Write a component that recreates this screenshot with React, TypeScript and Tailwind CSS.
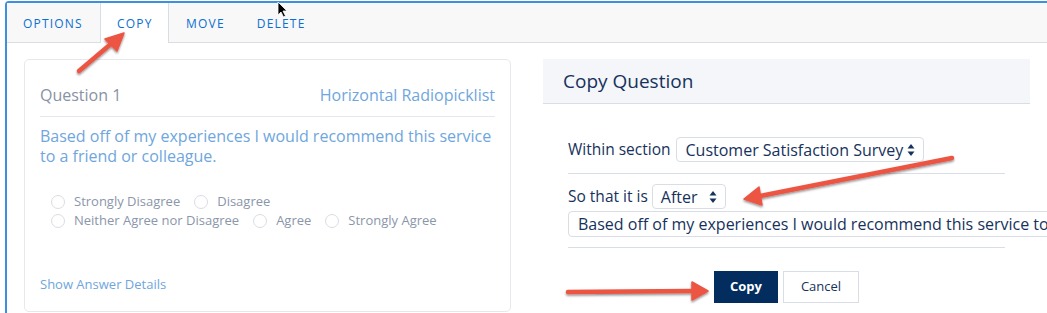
import React from "react";

const font = { fontFamily: '"Open Sans", "Lato", sans-serif' };

function Radio({ label }: { label: string }) {
  return (
    <span className="flex items-center gap-[9px] mr-[14px]">
      <span className="inline-block w-[14px] h-[14px] rounded-full border border-[#d8dde6] bg-white" />
      <span>{label}</span>
    </span>
  );
}

function UpDown() {
  return (
    <svg width="8" height="14" viewBox="0 0 8 14" className="ml-[4px]">
      <path d="M4 1 L7.5 5.5 L0.5 5.5 Z" fill="#16325c" />
      <path d="M4 13 L7.5 8.5 L0.5 8.5 Z" fill="#16325c" />
    </svg>
  );
}

export default function App() {
  return (
    <div
      className="relative w-[1047px] h-[313px] overflow-hidden bg-white"
      style={font}
    >
      <div className="ml-[5px] mt-[1px] h-[330px] border-l-2 border-t-2 border-[#3d8fdf] rounded-tl-[4px]">
        {/* tab bar */}
        <div className="flex h-[40px] bg-[#f8f8f8] border-b border-[#d8dde6] text-[12px] tracking-[0.1em] text-[#0b6fd1]">
          <div className="flex items-center pt-[2px] px-[16px] w-[93px]">OPTIONS</div>
          <div className="flex items-center pt-[2px] px-[16px] w-[69px] bg-white border-l border-r border-[#d8dde6] h-[40px] -mb-px">
            COPY
          </div>
          <div className="flex items-center pt-[2px] pl-[17px] pr-[15px]">MOVE</div>
          <div className="flex items-center pt-[2px] px-[17px]">DELETE</div>
        </div>

        {/* content */}
        <div className="flex gap-[32px] pl-[17px] pt-[16px]">
          {/* left card */}
          <div className="w-[487px] h-[253px] shrink-0 border border-[#e6e8ec] rounded-[5px] px-[15px] pt-[23px]">
            <div className="flex justify-between items-center pb-[9px] border-b border-[#e3e7ee]">
              <span className="text-[16px] text-[#8792a5]">Question 1</span>
              <span className="text-[16px] text-[#6fa6dd]">Horizontal Radiopicklist</span>
            </div>
            <div className="mt-[9px] text-[16px] leading-[20px] text-[#6fa6dd]">
              Based off of my experiences I would recommend this service
              <br />
              to a friend or colleague.
            </div>
            <div className="mt-[26px] pl-[11px] text-[13px] leading-[19px] text-[#8a96aa]">
              <div className="flex">
                <Radio label="Strongly Disagree" />
                <Radio label="Disagree" />
              </div>
              <div className="flex">
                <Radio label="Neither Agree nor Disagree" />
                <Radio label="Agree" />
                <Radio label="Strongly Agree" />
              </div>
            </div>
            <div className="mt-[45px] text-[13px] text-[#6fa6dd]">Show Answer Details</div>
          </div>

          {/* right panel */}
          <div className="w-[487px] shrink-0 text-[#16325c]">
            <div className="h-[45px] bg-[#f4f6f9] border-b border-[#d8dde6] flex items-center px-[20px] text-[19px]">
              Copy Question
            </div>
            <div className="px-[25px]">
              <div className="mt-[33px] flex items-center text-[15.5px] pb-[11px] border-b border-[#d8dde6]">
                <span className="mr-[6px]">Within section</span>
                <span className="flex items-center h-[25px] px-[8px] border border-[#d8dde6] rounded-[4px] text-[16px]">
                  Customer Satisfaction Survey
                  <UpDown />
                </span>
              </div>
              <div className="mt-[10px] flex items-center text-[15.5px]">
                <span className="mr-[4px]">So that it is</span>
                <span className="flex items-center justify-between w-[74px] h-[25px] px-[8px] border border-[#d8dde6] rounded-[4px] text-[16px]">
                  After
                  <UpDown />
                </span>
              </div>
              <div className="mt-[2px] w-[520px] h-[26px] flex items-center px-[9px] border border-[#d8dde6] rounded-[4px] text-[16px] whitespace-nowrap overflow-hidden">
                Based off of my experiences I would recommend this service to
              </div>
              <div className="mt-[10px] border-b border-[#d8dde6]" />
              <div className="mt-[23px] flex justify-center gap-[5px] text-[13px]">
                <button className="h-[32px] w-[64px] bg-[#032d5f] text-white font-bold">Copy</button>
                <button className="h-[32px] w-[76px] bg-white border border-[#d8dde6] text-[#16325c]">
                  Cancel
                </button>
              </div>
            </div>
          </div>
        </div>
      </div>

      {/* annotation arrows and cursor */}
      <svg
        className="absolute left-0 top-0 pointer-events-none"
        width="1047"
        height="313"
        viewBox="0 0 1047 313"
      >
        <defs>
          <filter id="sh" x="-20%" y="-20%" width="140%" height="140%">
            <feDropShadow dx="0" dy="1.5" stdDeviation="1.2" floodColor="#000" floodOpacity="0.45" />
          </filter>
        </defs>
        <g filter="url(#sh)" fill="#ec5443" stroke="#ec5443" strokeLinecap="round" strokeLinejoin="round">
          <line x1="79" y1="71" x2="112" y2="43" strokeWidth="4.5" />
          <polygon points="124,33 105,39 117,51" strokeWidth="1.5" />
          <line x1="952" y1="158" x2="760" y2="196" strokeWidth="4.5" />
          <polygon points="744,199 759,187 762,205" strokeWidth="1.5" />
          <line x1="568" y1="292" x2="692" y2="291" strokeWidth="4.5" />
          <polygon points="708,291 692,282 692,300" strokeWidth="1.5" />
        </g>
        <path
          d="M278 2 L278 15 L281 12 L283.5 17 L285.5 16 L283 11 L287 11 Z"
          fill="#000"
          stroke="#fff"
          strokeWidth="0.8"
        />
      </svg>
    </div>
  );
}
